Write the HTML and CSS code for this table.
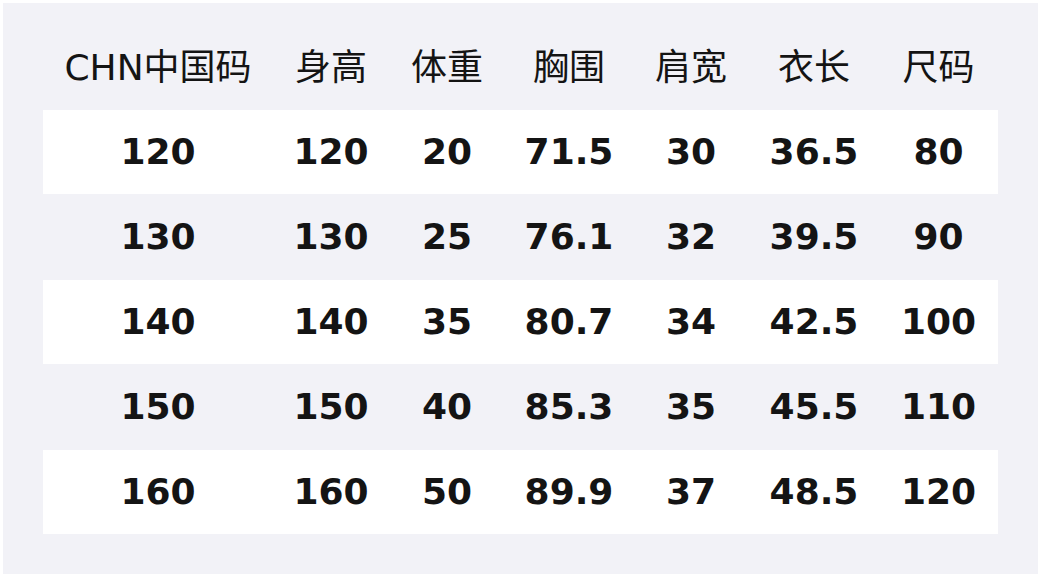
FILE: index.html
```html
<!DOCTYPE html>
<html lang="zh">
<head>
<meta charset="utf-8">
<link rel="stylesheet" href="styles.css">
</head>
<body>
<div class="panel">
  <table class="size-table">
    <colgroup>
      <col class="c1"><col class="c2"><col class="c3"><col class="c4"><col class="c5"><col class="c6"><col class="c7">
    </colgroup>
    <thead>
      <tr class="head">
        <th>CHN中国码</th><th>身高</th><th>体重</th><th>胸围</th><th>肩宽</th><th>衣长</th><th>尺码</th>
      </tr>
    </thead>
    <tbody>
      <tr class="odd"><td>120</td><td>120</td><td>20</td><td>71.5</td><td>30</td><td>36.5</td><td>80</td></tr>
      <tr class="even"><td>130</td><td>130</td><td>25</td><td>76.1</td><td>32</td><td>39.5</td><td>90</td></tr>
      <tr class="odd"><td>140</td><td>140</td><td>35</td><td>80.7</td><td>34</td><td>42.5</td><td>100</td></tr>
      <tr class="even"><td>150</td><td>150</td><td>40</td><td>85.3</td><td>35</td><td>45.5</td><td>110</td></tr>
      <tr class="odd"><td>160</td><td>160</td><td>50</td><td>89.9</td><td>37</td><td>48.5</td><td>120</td></tr>
    </tbody>
  </table>
</div>
</body>
</html>
```

FILE: styles.css
```css
html, body {
  margin: 0;
  padding: 0;
  background: #ffffff;
}

body {
  padding: 3px;
  font-family: "DejaVu Sans", "Noto Sans CJK SC", sans-serif;
  color: #141414;
}

.panel {
  width: 1035px;
  height: 571px;
  box-sizing: border-box;
  background: #f2f2f7;
  padding: 22px 40px 40px 40px;
}

.size-table {
  width: 955px;
  border-collapse: collapse;
  table-layout: fixed;
}

.c1 { width: 230px; }
.c2 { width: 116px; }
.c3 { width: 116px; }
.c4 { width: 128px; }
.c5 { width: 116px; }
.c6 { width: 130px; }
.c7 { width: 119px; }

.size-table th,
.size-table td {
  padding: 0;
  text-align: center;
  vertical-align: middle;
  font-size: 36px;
  line-height: 1;
  white-space: nowrap;
}

.size-table th {
  font-weight: normal;
}

.size-table td {
  font-weight: bold;
}

.head {
  height: 85px;
}

.odd {
  height: 83.5px;
  background: #ffffff;
}

.even {
  height: 86.5px;
  background: transparent;
}
```
